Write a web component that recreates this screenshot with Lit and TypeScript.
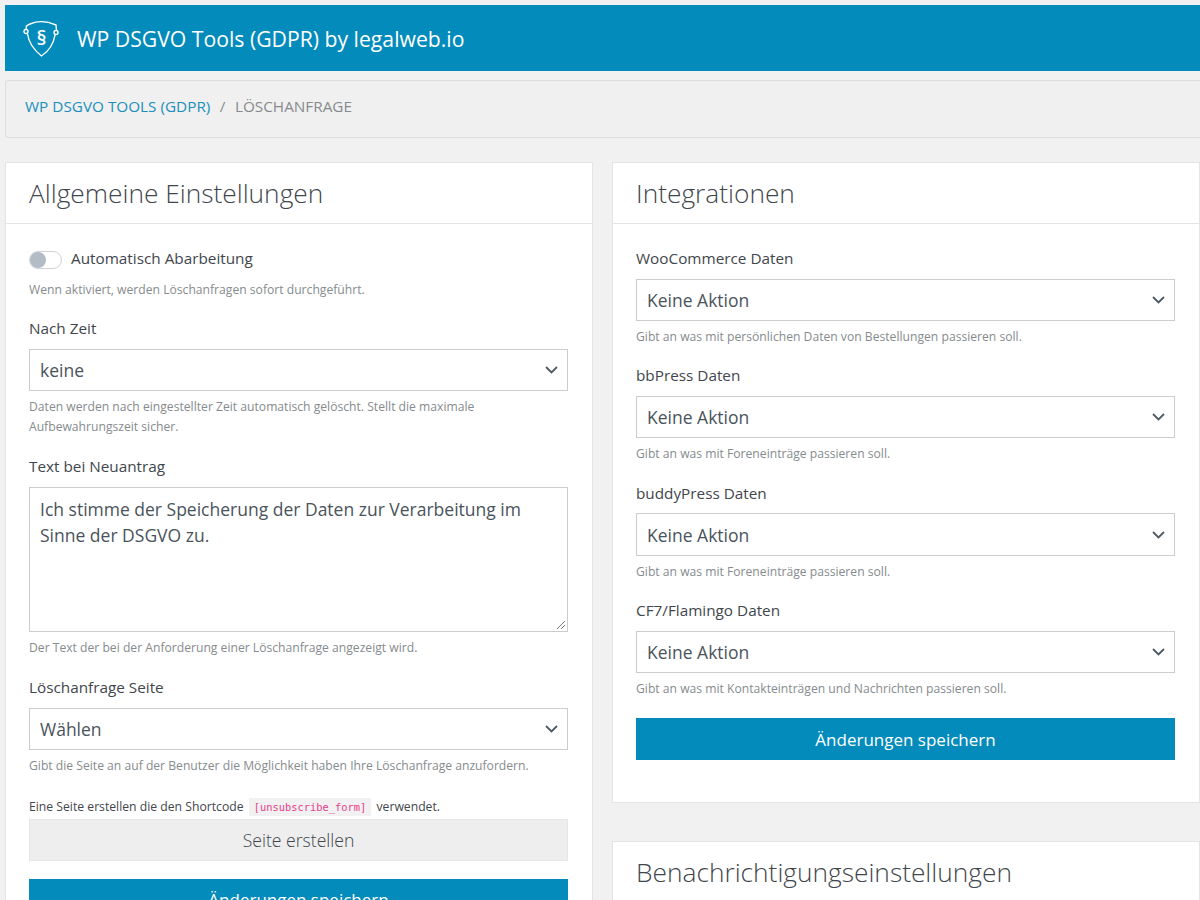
import { LitElement, html, css } from 'lit';
import { customElement } from 'lit/decorators.js';

const chevron = html`<svg class="chev" width="13" height="8" viewBox="0 0 13 8"><path d="M1 1l5.500 5.500L12 1" fill="none" stroke="#4f5a63" stroke-width="1.800"/></svg>`;

@customElement('app-root')
export class AppRoot extends LitElement {

  static styles = css`
    :host {
      display: block;
      height: 900px;
      overflow: hidden;
      background: #f1f1f1;
      font-family: "Open Sans", sans-serif;
      color: #3d444b;
      padding: 5px 0 0 5px;
      box-sizing: border-box;
    }
    .topbar {
      height: 66px;
      background: #038bbb;
      color: #fff;
      display: flex;
      align-items: center;
      padding-left: 18px;
      gap: 17px;
      font-size: 21.2px;
    }
    .crumbs {
      margin-top: 9px;
      height: 58px;
      box-sizing: border-box;
      background: #f0f0f0;
      border: 1px solid #dedede;
      border-right: 0;
      border-radius: 3px 0 0 3px;
      display: flex;
      align-items: center;
      padding: 0 0 7px 19px;
      font-size: 15.3px;
      color: #868b8e;
    }
    .crumbs a { color: #1b8fbd; }
    .crumbs .sep { margin: 0 9.500px; }
    .columns {
      display: grid;
      grid-template-columns: 588px 588px;
      gap: 19px;
      margin-top: 24px;
      align-items: start;
    }
    .stack { display: flex; flex-direction: column; gap: 38px; }
    .card {
      background: #fff;
      border: 1px solid #e4e4e4;
      box-sizing: border-box;
    }
    .card h2 {
      margin: 0;
      height: 60px;
      display: flex;
      align-items: center;
      padding-left: 23px;
      font-size: 26.3px;
      font-weight: 300;
      color: #3f464c;
      border-bottom: 1px solid #e4e4e4;
    }
    .body { padding: 24px 24px 42px 23px; }
    label, .lbl {
      display: block;
      font-size: 15.3px;
      line-height: 20px;
      color: #3f464c;
    }
    .field { margin-bottom: 18.4px; }
    .left .field { margin-bottom: 19.2px; }
    .left .field:first-child { margin-bottom: 18.2px; }
    .field label { margin-bottom: 10.5px; }
    .select {
      height: 42.500px;
      box-sizing: border-box;
      border: 1px solid #ccc;
      background: #fff;
      display: flex;
      align-items: center;
      justify-content: space-between;
      padding: 0 9px 0 10px;
      font-size: 17.5px;
      color: #4a535b;
    }
    .help {
      font-size: 12.15px;
      line-height: 20px;
      color: #868b8e;
      margin-top: 6px;
    }
    .toggle-row { display: flex; align-items: center; gap: 9px; height: 20px; }
    .toggle-row + .help { margin-top: 12px; }
    .toggle {
      width: 33px;
      height: 18px;
      box-sizing: border-box;
      border: 1px solid #ccd2d8;
      border-radius: 9px;
      background: #fff;
      position: relative;
      margin-top: 4px;
    }
    .toggle::before {
      content: "";
      position: absolute;
      left: 0;
      top: 0;
      width: 16px;
      height: 16px;
      border-radius: 50%;
      background: #b3bbc4;
    }
    .textarea {
      height: 145px;
      box-sizing: border-box;
      border: 1px solid #ccc;
      padding: 8px 10px;
      font-size: 17.5px;
      line-height: 26px;
      color: #4a535b;
      position: relative;
    }
    .grip { position: absolute; right: 1px; bottom: 1px; }
    .shortcode-line {
      font-size: 12.2px;
      line-height: 20px;
      color: #3f464c;
      margin: 20.500px 0 2px;
    }
    code {
      font-family: "DejaVu Sans Mono", monospace;
      font-size: 10.4px;
      color: #e83e8c;
      background: #f1f1f1;
      padding: 3px 5px;
      margin: 0 2px;
    }
    .btn {
      height: 42px;
      box-sizing: border-box;
      display: flex;
      align-items: center;
      justify-content: center;
      font-size: 17px;
    }
    .btn.grey { background: #eee; border: 1px solid #e6e6e6; color: #3f464c; font-weight: 300; font-size: 17.6px; }
    .btn.blue { background: #038bbb; color: #fff; margin-top: 19px; }
    .left .btn.blue { margin-top: 18px; }
  `;

  field (name: string, value: string, help: string) {
    return html`
      <div class="field">
        <label>${name}</label>
        <div class="select"><span>${value}</span>${chevron}</div>
        <div class="help">${help}</div>
      </div>
    `;
  }

  render () {

    return html`
      <div class="topbar">
        <svg width="37" height="37" viewBox="0 0 37 37" fill="none" stroke="#fff" stroke-width="1.400">
          <path d="M3 9l.5-3L7 4C15 .5 24 1 33 5l.5 5"/>
          <path d="M4.500 14C6 24 11 30 18.500 36 26 31 30.500 24 32 15"/>
          <circle cx="3" cy="11.500" r="2"/>
          <circle cx="33" cy="12.500" r="2"/>
          <text x="18.500" y="25" text-anchor="middle" font-size="20" font-weight="600" fill="#fff" stroke="none" font-family="Open Sans, sans-serif">§</text>
        </svg>
        <span>WP DSGVO Tools (GDPR) by legalweb.io</span>
      </div>
      <div class="crumbs"><a>WP DSGVO TOOLS (GDPR)</a><span class="sep">/</span><span>LÖSCHANFRAGE</span></div>
      <div class="columns">
        <div class="card left">
          <h2>Allgemeine Einstellungen</h2>
          <div class="body">
            <div class="field">
              <div class="toggle-row"><span class="toggle"></span><span class="lbl">Automatisch Abarbeitung</span></div>
              <div class="help">Wenn aktiviert, werden Löschanfragen sofort durchgeführt.</div>
            </div>
            ${this.field('Nach Zeit', 'keine', 'Daten werden nach eingestellter Zeit automatisch gelöscht. Stellt die maximale Aufbewahrungszeit sicher.')}
            <div class="field">
              <label>Text bei Neuantrag</label>
              <div class="textarea">
                Ich stimme der Speicherung der Daten zur Verarbeitung im Sinne der DSGVO zu.
                <svg class="grip" width="10" height="10" viewBox="0 0 10 10"><path d="M1 9l8-8M5 9l4-4" stroke="#777" stroke-width="1"/></svg>
              </div>
              <div class="help">Der Text der bei der Anforderung einer Löschanfrage angezeigt wird.</div>
            </div>
            ${this.field('Löschanfrage Seite', 'Wählen', 'Gibt die Seite an auf der Benutzer die Möglichkeit haben Ihre Löschanfrage anzufordern.')}
            <div class="shortcode-line">Eine Seite erstellen die den Shortcode <code>[unsubscribe_form]</code> verwendet.</div>
            <div class="btn grey">Seite erstellen</div>
            <div class="btn blue">Änderungen speichern</div>
          </div>
        </div>
        <div class="stack">
          <div class="card right">
            <h2>Integrationen</h2>
            <div class="body">
              ${this.field('WooCommerce Daten', 'Keine Aktion', 'Gibt an was mit persönlichen Daten von Bestellungen passieren soll.')}
              ${this.field('bbPress Daten', 'Keine Aktion', 'Gibt an was mit Foreneinträge passieren soll.')}
              ${this.field('buddyPress Daten', 'Keine Aktion', 'Gibt an was mit Foreneinträge passieren soll.')}
              ${this.field('CF7/Flamingo Daten', 'Keine Aktion', 'Gibt an was mit Kontakteinträgen und Nachrichten passieren soll.')}
              <div class="btn blue">Änderungen speichern</div>
            </div>
          </div>
          <div class="card right">
            <h2>Benachrichtigungseinstellungen</h2>
          </div>
        </div>
      </div>
    `;

  }

}
